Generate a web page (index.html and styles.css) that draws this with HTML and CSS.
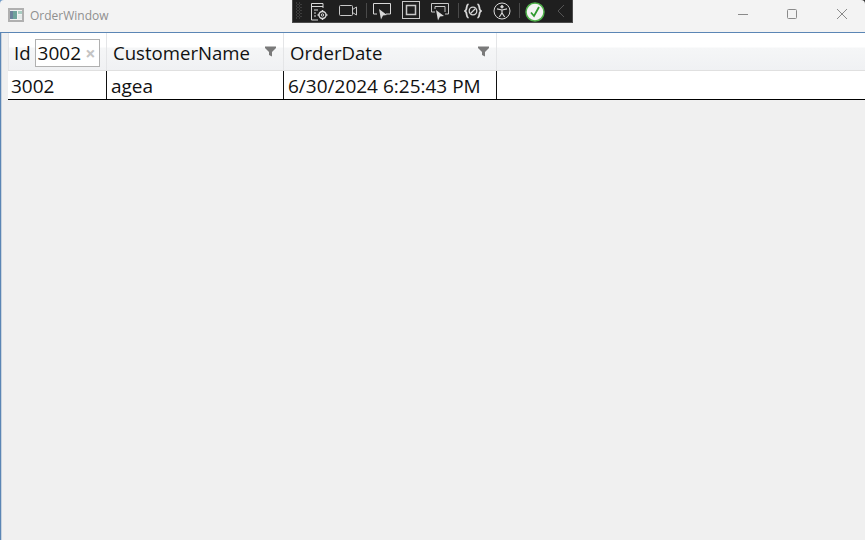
FILE: index.html
```html
<!DOCTYPE html>
<html lang="en">
<head>
<meta charset="utf-8">
<title>OrderWindow</title>
<link rel="stylesheet" href="styles.css">
</head>
<body>
<div class="window">
  <header class="titlebar">
    <svg class="app-icon" width="16" height="14" viewBox="0 0 16 14"><rect x="1" y="1" width="14" height="12" fill="#f2f2f2" stroke="#b0b0b0" stroke-width="2"/><rect x="2" y="3" width="7" height="8" fill="#6fa39c"/><rect x="2" y="3" width="3" height="8" fill="#6d829c"/><rect x="10" y="3" width="4" height="3" fill="#a9cdc2"/><rect x="10" y="7" width="4" height="4" fill="#e4eaea"/></svg>
    <span class="title">OrderWindow</span>
    <div class="caption">
      <svg class="cap cap-min" width="50" height="32" viewBox="0 0 50 32"><path d="M18 15.500h10" stroke="#8a8a8a" fill="none"/></svg>
      <svg class="cap cap-max" width="49" height="32" viewBox="0 0 49 32"><rect x="17.500" y="10.500" width="9" height="9" rx="1" stroke="#8a8a8a" fill="none"/></svg>
      <svg class="cap cap-close" width="46" height="32" viewBox="0 0 46 32"><path d="M18 10l10 10M28 10l-10 10" stroke="#8a8a8a" fill="none"/></svg>
    </div>
  </header>

  <div class="devbar">
    <svg class="grip" width="8" height="20" viewBox="0 0 8 20"><path d="M1 2h1M4 2h1M2.500 3.500h1M5.500 3.500h1M1 5h1M4 5h1M2.500 6.500h1M5.500 6.500h1M1 8h1M4 8h1M2.500 9.500h1M5.500 9.500h1M1 11h1M4 11h1M2.500 12.500h1M5.500 12.500h1M1 14h1M4 14h1M2.500 15.500h1M5.500 15.500h1M1 17h1M4 17h1" stroke="#5a5a5a" fill="none"/></svg>
    <svg class="tool t1" width="20" height="20" viewBox="0 0 20 20" fill="none" stroke="#d8d8d8"><path d="M9 18H2.500V1.500H14V6M2.500 4.500H14M5 8h4M5 11h2M5 14h2"/><circle cx="13.500" cy="13" r="3.500" stroke-width="1.400"/><circle cx="13.500" cy="13" r="1.200"/><path d="M13.500 8v1.500M13.500 16.500V18M8.500 13H10M17 13h1.500" stroke-width="1.400"/></svg>
    <svg class="tool t2" width="20" height="20" viewBox="0 0 20 20" fill="none" stroke="#c8c8c8"><rect x="1.500" y="4.500" width="13" height="10" rx="1"/><path d="M14.500 8.500l4-2.500v8l-4-2.500"/></svg>
    <span class="sep s1"></span>
    <svg class="tool t3" width="20" height="20" viewBox="0 0 20 20" fill="none" stroke="#d8d8d8"><path d="M5 12H1.500V1.500h17V12H14"/><path d="M7 7l8 6-4 .5-2 4z" fill="#d8d8d8" stroke="none"/></svg>
    <svg class="tool t4" width="18" height="18" viewBox="0 0 18 18" fill="none" stroke="#c8c8c8"><rect x=".5" y=".5" width="17" height="17"/><rect x="4.500" y="4.500" width="9" height="9" stroke-width="1.500"/></svg>
    <svg class="tool t5" width="20" height="20" viewBox="0 0 20 20" fill="none" stroke="#c8c8c8"><path d="M5 10H1.500V1.500h17V12H15M5 7V4.500h10V10"/><path d="M6 8l8 6-4 .5-2 4z" fill="#d8d8d8" stroke="none"/></svg>
    <span class="sep s2"></span>
    <svg class="tool t6" width="18" height="18" viewBox="0 0 18 18" fill="none" stroke="#d8d8d8"><path d="M4.500 2C2 3 3 6 2.200 7.500 1.900 8.300 1 9 1 9s.9.700 1.200 1.500C3 12 2 15 4.500 16M13.500 2C16 3 15 6 15.800 7.500c.3.800 1.200 1.500 1.200 1.500s-.9.700-1.200 1.500C15 12 16 15 13.500 16" stroke-width="1.800"/><circle cx="9" cy="9" r="3.800" stroke-width="1.300"/><path d="M6.500 11.500l5-5" stroke-width="1.300"/></svg>
    <svg class="tool t7" width="18" height="18" viewBox="0 0 18 18" fill="none" stroke="#d8d8d8"><circle cx="9" cy="9" r="8"/><circle cx="9" cy="4.800" r="1.200" fill="#d8d8d8"/><path d="M4 6.800L9 8l5-1.200M9 8v3M9 11l-2.700 4M9 11l2.700 4" stroke-width="1.200"/></svg>
    <span class="sep s3"></span>
    <svg class="tool t8" width="20" height="20" viewBox="0 0 20 20" fill="none"><circle cx="10" cy="10" r="9" fill="#f4f4f4" stroke="#4fb04a" stroke-width="1.500"/><path d="M6 10.500l3 3.500 5-9" stroke="#2f9a2f" stroke-width="1.800"/></svg>
    <svg class="tool t9" width="10" height="14" viewBox="0 0 10 14" fill="none" stroke="#555"><path d="M8 1L2 7l6 6"/></svg>
  </div>

  <main class="content">
    <div class="grid">
      <div class="header">
        <div class="hcell c-id">
          <span class="hlabel">Id</span>
          <span class="filterbox"><span class="fv">3002</span><span class="clear">×</span></span>
        </div>
        <div class="hcell c-name">
          <span class="hlabel">CustomerName</span>
          <svg class="funnel" width="11" height="11" viewBox="0 0 11 11"><path d="M0 .5h11v1.500L7 6v4.500L4 9V6L0 2z" fill="#7a7a7a"/></svg>
        </div>
        <div class="hcell c-date">
          <span class="hlabel">OrderDate</span>
          <svg class="funnel" width="11" height="11" viewBox="0 0 11 11"><path d="M0 .5h11v1.500L7 6v4.500L4 9V6L0 2z" fill="#7a7a7a"/></svg>
        </div>
        <div class="hcell c-fill"></div>
      </div>
      <div class="row">
        <div class="cell c-id">3002</div>
        <div class="cell c-name">agea</div>
        <div class="cell c-date">6/30/2024 6:25:43 PM</div>
        <div class="cell c-fill"></div>
      </div>
    </div>
  </main>
</div>
</body>
</html>
```

FILE: styles.css
```css
html, body {
  margin: 0;
  padding: 0;
  height: 100%;
  background: #f0f0f0;
  overflow: hidden;
}
body {
  font-family: "Open Sans", "Noto Sans", sans-serif;
  color: #111;
}
.window {
  position: relative;
  width: 865px;
  height: 540px;
  display: flex;
  flex-direction: column;
  background: linear-gradient(90deg, #6f9ac6 50%, #333 50%) no-repeat top / 100% 8px #f0f0f0;
}
.titlebar {
  height: 32px;
  flex: none;
  display: flex;
  align-items: center;
  padding-left: 8px;
  padding-bottom: 2px;
  background: #f3f3f3;
  border-radius: 4px 4px 0 0;
  box-sizing: border-box;
}
.app-icon { flex: none; margin-right: 6px; }
.title {
  font-size: 12px;
  color: #8f8f8f;
}
.caption {
  margin-left: auto;
  display: flex;
}
.cap { display: block; }
.devbar {
  position: absolute;
  left: 292px;
  top: 0;
  width: 281px;
  height: 23px;
  box-sizing: border-box;
  background: #1f1f1f;
  border: 1px solid #4c4c4c;
  border-top: 0;
}
.grip { position: absolute; left: 2px; top: 1px; }
.tool { position: absolute; top: 2px; }
.t1 { left: 16px; }
.t2 { left: 45px; top: 1px; }
.t3 { left: 79px; }
.t4 { left: 109px; top: 1px; }
.t5 { left: 137px; }
.t6 { left: 171px; top: 2px; }
.t7 { left: 200px; top: 2px; }
.t8 { left: 232px; }
.t9 { left: 263px; top: 4px; }
.sep {
  position: absolute;
  top: 3px;
  width: 1px;
  height: 15px;
  background: #4a4a4a;
}
.s1 { left: 73px; }
.s2 { left: 165px; }
.s3 { left: 226px; }
.content {
  flex: 1;
  border-top: 1px solid #5b86b5;
  border-left: 1px solid #5b86b5;
  box-shadow: inset 1px 0 #c9d3de;
  padding-left: 7px;
  background: #f0f0f0;
  min-height: 0;
}
.grid {
  display: flex;
  flex-direction: column;
  font-size: 19px;
  line-height: 24px;
}
.header {
  display: flex;
  height: 38px;
  box-sizing: border-box;
  border-bottom: 1px solid #e0e0e0;
  background: linear-gradient(#ffffff 0, #ffffff 14px, #f5f6f7 15px, #f0f1f3 37px);
}
.row {
  display: flex;
  height: 29px;
  box-sizing: border-box;
  background: #fff;
  border-bottom: 1px solid #000;
}
.c-id { width: 99px; flex: none; }
.c-name { width: 177px; flex: none; }
.c-date { width: 213px; flex: none; }
.c-fill { flex: 1; }
.hcell {
  box-sizing: border-box;
  display: flex;
  align-items: center;
  padding: 3px 8px 0 6px;
  border-right: 1px solid #e4e5e7;
}
.c-id.hcell { border-left: 1px solid #e4e5e7; padding-left: 5px; padding-right: 0; }
.c-fill.hcell { border-right: 0; }
.hlabel { white-space: nowrap; font-size: 18.600px; }
.filterbox {
  margin-left: 4px;
  width: 65px;
  flex: none;
  height: 28px;
  box-sizing: border-box;
  border: 1px solid #b0b0b0;
  background: #fff;
  display: flex;
  align-items: center;
  padding-left: 2px;
}
.fv { flex: 1; }
.clear {
  color: #c4c4c4;
  font-size: 18px;
  font-weight: 700;
  margin-right: 3px;
}
.funnel { margin-left: auto; margin-top: -3px; margin-right: -1px; }
.cell {
  box-sizing: border-box;
  padding: 3px 0 0 4px;
  border-right: 1px solid #111;
  white-space: nowrap;
}
.cell.c-id { padding-left: 3px; }
.cell.c-fill { border-right: 0; }
```
